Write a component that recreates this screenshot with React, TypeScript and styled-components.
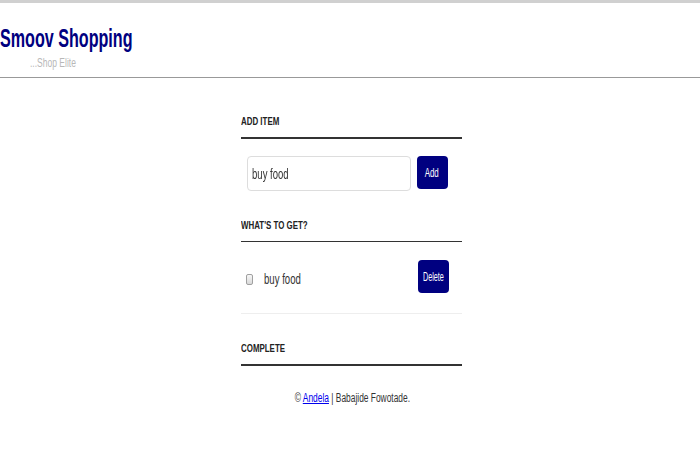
import { useEffect, useRef } from "react"
import styled, { createGlobalStyle } from "styled-components"

const GlobalStyle = createGlobalStyle`
    html, body {
        margin: 0;
        padding: 0;
        background: #fff;
    }
    body {
        font-family: "Liberation Sans", Arial, sans-serif;
        color: #222;
    }
`

// the screenshot's type is horizontally condensed, so each label gets squeezed
const Narrow = styled.span<{ $scale: number; $origin?: string }>`
    display: inline-block;
    white-space: nowrap;
    transform: scaleX(${({ $scale }) => $scale});
    transform-origin: ${({ $origin }) => $origin || "left center"};
`

const Page = styled.div`
    border-top: 3px solid #d0d0d0;
    min-height: 447px;
`

const Header = styled.header`
    padding: 20px 0 7px;
    border-bottom: 1px solid #999;
`

const Title = styled.h1`
    margin: 0;
    font-size: 26px;
    line-height: 30px;
    font-weight: 700;
    color: #000080;
`

const Tagline = styled.div`
    margin-top: 3px;
    padding-left: 30px;
    font-size: 12px;
    line-height: 14px;
    color: #b8b8b8;
`

const Main = styled.main`
    width: 221px;
    margin: 0 auto;
    padding-top: 37px;
    padding-left: 2px;
`

const SectionTitle = styled.h3<{ $thin?: boolean }>`
    margin: 0;
    font-size: 11px;
    line-height: 12px;
    font-weight: 700;
    color: #222;
    padding-bottom: 10px;
    border-bottom: ${({ $thin }) => ($thin ? "1px" : "2px")} solid #333;
`

const AddRow = styled.div`
    display: flex;
    align-items: flex-start;
    gap: 6px;
    padding: 17px 0 28px 6px;
`

const InputBox = styled.div`
    box-sizing: border-box;
    width: 164px;
    height: 35px;
    border: 1px solid #ddd;
    border-radius: 4px;
    overflow: hidden;
    display: flex;
    align-items: center;
`

const Input = styled.input`
    box-sizing: border-box;
    width: 230px;
    height: 33px;
    border: none;
    padding: 0 6px;
    font-family: inherit;
    font-size: 14px;
    color: #333;
    outline: none;
    background: transparent;
    transform: scaleX(0.68);
    transform-origin: left center;
`

const Button = styled.button`
    cursor: pointer;
    border: none;
    border-radius: 4px;
    background-color: #000080;
    color: #fff;
    font-family: inherit;
    font-size: 12px;
    width: 31px;
    height: 33px;
    padding: 0;
    display: flex;
    align-items: center;
    justify-content: center;
    overflow: hidden;
`

const ItemRow = styled.div`
    display: flex;
    align-items: center;
    padding: 18px 13px 20px 5px;
    border-bottom: 1px solid #eee;
`

const Check = styled.span`
    box-sizing: border-box;
    flex: none;
    width: 7px;
    height: 11px;
    margin-top: 5px;
    border: 1px solid #a0a0a0;
    border-radius: 2px;
    background: linear-gradient(#f8f8f8, #d8d8d8);
    margin-right: 11px;
`

const ItemText = styled.span`
    flex: 1;
    padding-top: 4px;
    font-size: 15px;
    color: #333;
`

const Spacer = styled.div`
    height: 28px;
`

const Footer = styled.footer`
    text-align: center;
    font-size: 12px;
    color: #333;
    padding-top: 25px;
    margin-left: 2px;

    a {
        color: #00e;
    }
`

export default function App() {
    const inputRef = useRef<HTMLInputElement>(null)

    useEffect(() => {
        const el = inputRef.current
        if (el) {
            el.focus()
            el.setSelectionRange(el.value.length, el.value.length)
        }
    }, [])

    return (
        <Page>
            <GlobalStyle />
            <Header>
                <Title><Narrow $scale={0.62}>Smoov Shopping</Narrow></Title>
                <Tagline><Narrow $scale={0.71}>...Shop Elite</Narrow></Tagline>
            </Header>
            <Main>
                <SectionTitle><Narrow $scale={0.72}>ADD ITEM</Narrow></SectionTitle>
                <AddRow>
                    <InputBox>
                        <Input ref={inputRef} defaultValue="buy food" />
                    </InputBox>
                    <Button><Narrow $scale={0.66} $origin="center">Add</Narrow></Button>
                </AddRow>
                <SectionTitle $thin><Narrow $scale={0.72}>WHAT'S TO GET?</Narrow></SectionTitle>
                <ItemRow>
                    <Check />
                    <ItemText><Narrow $scale={0.64}>buy food</Narrow></ItemText>
                    <Button><Narrow $scale={0.6} $origin="center">Delete</Narrow></Button>
                </ItemRow>
                <Spacer />
                <SectionTitle><Narrow $scale={0.72}>COMPLETE</Narrow></SectionTitle>
                <Footer>
                    <Narrow $scale={0.7} $origin="center">
                        © <a href="#">Andela</a> | Babajide Fowotade.
                    </Narrow>
                </Footer>
            </Main>
        </Page>
    )
}
